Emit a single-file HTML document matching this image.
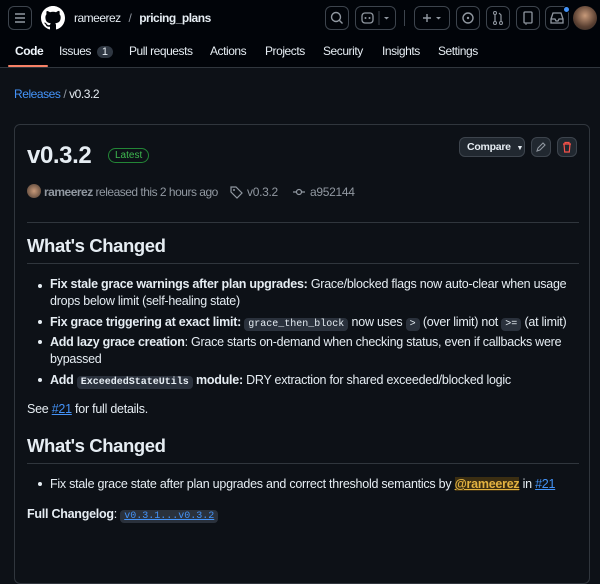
<!DOCTYPE html>
<html><head><meta charset="utf-8"><style>
*{margin:0;padding:0;box-sizing:border-box}
body{width:600px;height:541px;background:#0d1117;color:#e6edf3;font-family:"Liberation Sans",sans-serif;font-size:12.5px;letter-spacing:-0.25px;position:relative;overflow:hidden}
.a{position:absolute;white-space:nowrap}
.hdr{position:absolute;left:0;top:0;width:600px;height:68px;background:#010409;border-bottom:1px solid #30363d}
.btn{position:absolute;border:1px solid #3d444d;border-radius:6px;height:24px;top:6px}
.card{position:absolute;left:14px;top:124px;width:576px;height:460px;border:1px solid #30363d;border-radius:6px}
.hr{position:absolute;left:27px;width:552px;height:1px;background:#30363d}
code{font-family:"Liberation Mono",monospace;font-size:10px;background:#2a313c;border-radius:4px;padding:1px 4px;letter-spacing:0}
b{font-weight:bold}
.lnk{color:#4493f8;text-decoration:underline}
.bul{position:absolute;left:38px;width:4px;height:4px;border-radius:2px;background:#e6edf3}
.tab{font-size:12px;letter-spacing:-0.45px}
</style></head><body>
<div class="hdr"></div>
<div class="btn" style="left:8px;width:24px"><svg width="22" height="22" viewBox="0 0 22 22"><path d="M6 7h10M6 11h10M6 15h10" stroke="#9198a1" stroke-width="1.5"/></svg></div>
<svg class="a" style="left:41px;top:6px" width="24" height="24" viewBox="0 0 16 16"><path fill="#fff" d="M8 0C3.58 0 0 3.58 0 8c0 3.54 2.29 6.530 5.47 7.59.4.07.55-.17.55-.38 0-.19-.01-.82-.01-1.49-2.01.37-2.530-.49-2.69-.94-.09-.23-.48-.94-.82-1.13-.28-.15-.68-.52-.01-.53.63-.01 1.08.58 1.23.82.72 1.21 1.87.87 2.33.66.07-.52.28-.87.51-1.07-1.78-.2-3.64-.89-3.64-3.950 0-.87.31-1.59.82-2.15-.08-.2-.36-1.02.08-2.12 0 0 .67-.21 2.2.82.64-.18 1.32-.27 2-.27.68 0 1.36.09 2 .27 1.53-1.04 2.2-.82 2.2-.82.44 1.1.16 1.92.08 2.12.51.56.82 1.27.82 2.15 0 3.07-1.87 3.75-3.65 3.95.29.25.54.73.54 1.48 0 1.07-.01 1.93-.01 2.2 0 .21.15.46.55.38A8.013 8.013 0 0016 8c0-4.42-3.58-8-8-8z"/></svg>
<div class="a" style="left:74px;top:11px;font-size:12px;letter-spacing:-0.5px">rameerez <span style="color:#9198a1;margin:0 5px">/</span> <b style="font-weight:600">pricing_plans</b></div>
<div class="btn" style="left:325px;width:24px"><svg width="22" height="22"><circle cx="10" cy="10" r="4.5" stroke="#9198a1" stroke-width="1.4" fill="none"/><path d="M13.5 13.5l3 3" stroke="#9198a1" stroke-width="1.4"/></svg></div>
<div class="btn" style="left:355px;width:41px"><svg width="40" height="22"><rect x="6" y="6" width="11" height="10" rx="3" stroke="#9198a1" stroke-width="1.3" fill="none"/><circle cx="9.5" cy="11" r="1" fill="#9198a1"/><circle cx="13.5" cy="11" r="1" fill="#9198a1"/><path d="M23 4v14" stroke="#3d444d"/><path d="M28 10l2.5 2.5L33 10z" fill="#9198a1"/></svg></div>
<div class="a" style="left:404px;top:10px;width:1px;height:16px;background:#3d444d"></div>
<div class="btn" style="left:414px;width:36px"><svg width="34" height="22"><path d="M8 11h8M12 7v8" stroke="#9198a1" stroke-width="1.4"/><path d="M21 10l2.5 2.5L26 10z" fill="#9198a1"/></svg></div>
<div class="btn" style="left:456px;width:24px"><svg width="22" height="22"><circle cx="11" cy="11" r="5" stroke="#9198a1" stroke-width="1.4" fill="none"/><circle cx="11" cy="11" r="1.2" fill="#9198a1"/></svg></div>
<div class="btn" style="left:486px;width:24px"><svg width="22" height="22"><circle cx="8" cy="6" r="1.5" stroke="#9198a1" fill="none"/><circle cx="8" cy="16" r="1.5" stroke="#9198a1" fill="none"/><circle cx="14" cy="16" r="1.5" stroke="#9198a1" fill="none"/><path d="M8 8v6M14 14V8l-2-2" stroke="#9198a1" stroke-width="1.2" fill="none"/></svg></div>
<div class="btn" style="left:516px;width:24px"><svg width="22" height="22"><rect x="7" y="5" width="8" height="11" rx="1" stroke="#9198a1" stroke-width="1.3" fill="none"/><path d="M9 16v2" stroke="#9198a1"/></svg></div>
<div class="btn" style="left:545px;width:24px"><svg width="22" height="22"><path d="M5 12l2-6h8l2 6v4H5z M5 12h4l1 2h2l1-2h4" stroke="#9198a1" stroke-width="1.3" fill="none"/></svg></div>
<div class="a" style="left:563px;top:6px;width:7px;height:7px;border-radius:4px;background:#4493f8;border:1px solid #010409"></div>
<div class="a" style="left:573px;top:6px;width:24px;height:24px;border-radius:12px;background:radial-gradient(circle at 50% 40%,#c89a7a,#5a4032 60%,#2a2624)"></div>
<div class="a tab" style="left:15px;top:44px;font-weight:bold;color:#f0f6fc">Code</div>
<div class="a" style="left:8px;top:65px;width:40px;height:2px;background:#f78166;border-radius:2px"></div>
<div class="a tab" style="left:59px;top:44px">Issues <span style="display:inline-block;background:#2f3742;border-radius:9px;padding:0 5px;font-size:11px;margin-left:3px">1</span></div>
<div class="a tab" style="left:129px;top:44px">Pull requests</div>
<div class="a tab" style="left:210px;top:44px">Actions</div>
<div class="a tab" style="left:265px;top:44px">Projects</div>
<div class="a tab" style="left:323px;top:44px">Security</div>
<div class="a tab" style="left:382px;top:44px">Insights</div>
<div class="a tab" style="left:438px;top:44px">Settings</div>
<div class="a tab" style="left:14px;top:87px"><span style="color:#4493f8">Releases</span> <span style="color:#9198a1">/</span> v0.3.2</div>
<div class="card"></div>
<div class="a" style="left:27px;top:142px;font-size:24px;font-weight:bold;letter-spacing:-0.4px">v0.3.2</div>
<div class="a" style="left:108px;top:148px;border:1px solid #238636;border-radius:10px;color:#3fb950;font-size:10px;padding:1px 6px;letter-spacing:0">Latest</div>
<div class="a" style="left:459px;top:137px;width:66px;height:20px;background:#212830;border:1px solid #3d444d;border-radius:6px;font-size:10.5px;font-weight:bold;padding:3px 0 0 7px">Compare <span style="font-size:7px;margin-left:3px">▼</span></div>
<div class="a" style="left:531px;top:137px;width:20px;height:20px;background:#212830;border:1px solid #3d444d;border-radius:6px"><svg width="18" height="18"><path d="M5 13l1-3 5-5 2 2-5 5z" stroke="#9198a1" fill="none" stroke-width="1.1"/></svg></div>
<div class="a" style="left:557px;top:137px;width:20px;height:20px;background:#212830;border:1px solid #3d444d;border-radius:6px"><svg width="18" height="18"><path d="M5 6h8M7 6V4.5h4V6M6 6l.7 8h4.6l.7-8" stroke="#f85149" fill="none" stroke-width="1.2"/></svg></div>
<div class="a" style="left:27px;top:184px;width:14px;height:14px;border-radius:7px;background:radial-gradient(circle,#c89a7a,#4a3a30)"></div>
<div class="a" style="left:44px;top:185px;color:#9198a1;font-size:12px;letter-spacing:-0.5px"><b style="color:#9198a1;font-weight:600">rameerez</b> released this 2 hours ago</div>
<svg class="a" style="left:229px;top:185px" width="14" height="14"><path d="M2 2h5l6 6-5 5-6-6z" stroke="#9198a1" fill="none" stroke-width="1.2"/><circle cx="5" cy="5" r="1" fill="#9198a1"/></svg>
<div class="a" style="left:247px;top:185px;color:#9198a1;font-size:12px;letter-spacing:-0.3px">v0.3.2</div>
<svg class="a" style="left:292px;top:185px" width="14" height="14"><circle cx="7" cy="7" r="2.5" stroke="#9198a1" fill="none" stroke-width="1.2"/><path d="M1 7h3.5M9.5 7H13" stroke="#9198a1" stroke-width="1.2"/></svg>
<div class="a" style="left:310px;top:185px;color:#9198a1;font-size:12px;letter-spacing:-0.3px">a952144</div>
<div class="hr" style="top:222px"></div>
<div class="a" style="left:27px;top:235px;font-size:18.5px;font-weight:bold;letter-spacing:-0.4px">What's Changed</div>
<div class="hr" style="top:263px"></div>
<div class="bul" style="top:284px"></div><div class="bul" style="top:320px"></div><div class="bul" style="top:340px"></div><div class="bul" style="top:378px"></div><div class="bul" style="top:482px"></div>
<div class="a" style="left:50px;top:277px"><b>Fix stale grace warnings after plan upgrades:</b> Grace/blocked flags now auto-clear when usage</div>
<div class="a" style="left:50px;top:294px">drops below limit (self-healing state)</div>
<div class="a" style="left:50px;top:315px"><b>Fix grace triggering at exact limit:</b> <code>grace_then_block</code> now uses <code>&gt;</code> (over limit) not <code>&gt;=</code> (at limit)</div>
<div class="a" style="left:50px;top:335px"><b>Add lazy grace creation</b>: Grace starts on-demand when checking status, even if callbacks were</div>
<div class="a" style="left:50px;top:352px">bypassed</div>
<div class="a" style="left:50px;top:373px"><b>Add <code style="font-weight:bold">ExceededStateUtils</code> module:</b> DRY extraction for shared exceeded/blocked logic</div>
<div class="a" style="left:27px;top:402px">See <span class="lnk">#21</span> for full details.</div>
<div class="a" style="left:27px;top:435px;font-size:18.5px;font-weight:bold;letter-spacing:-0.4px">What's Changed</div>
<div class="hr" style="top:463px"></div>
<div class="a" style="left:50px;top:477px">Fix stale grace state after plan upgrades and correct threshold semantics by <span style="color:#e3b341;background:#3b2e12;font-weight:bold;text-decoration:underline">@rameerez</span> in <span class="lnk">#21</span></div>
<div class="a" style="left:27px;top:507px"><b>Full Changelog</b>: <code style="color:#4493f8;text-decoration:underline">v0.3.1...v0.3.2</code></div>
</body></html>
